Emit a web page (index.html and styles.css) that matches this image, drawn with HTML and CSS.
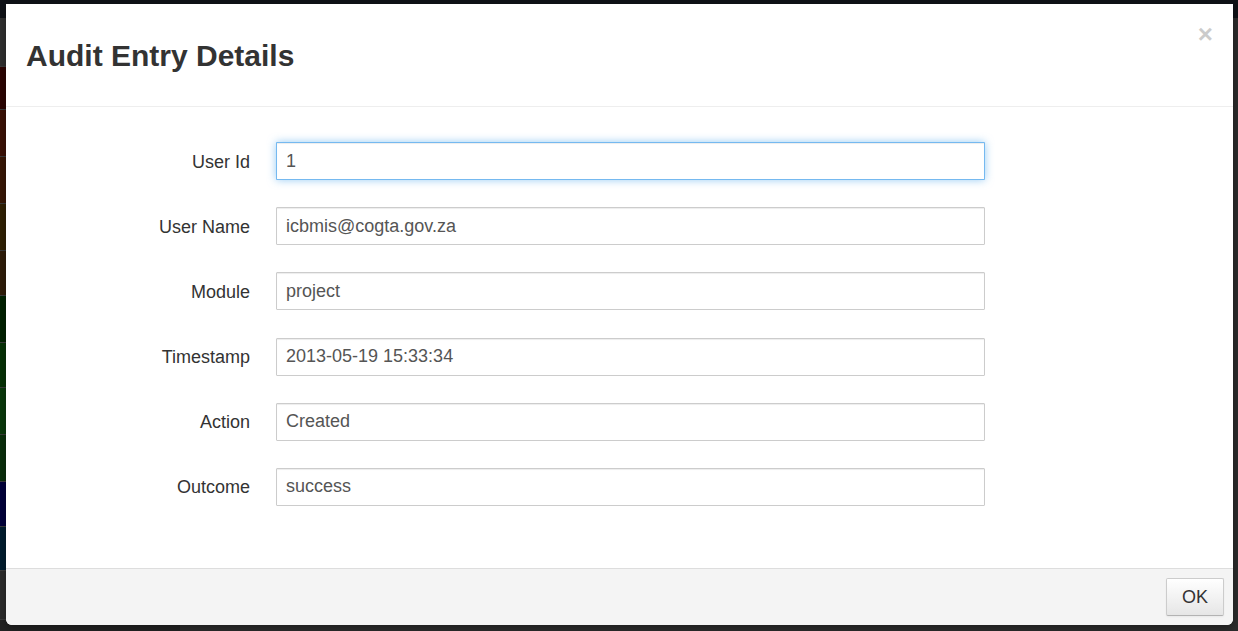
FILE: index.html
```html
<!DOCTYPE html>
<html>
<head>
<meta charset="utf-8">
<title>Audit Entry Details</title>
<link rel="stylesheet" href="styles.css">
</head>
<body>
<div class="page">
  <div class="topbar"></div>
  <div class="main">
    <div class="side">
      <div class="tile t-gray"></div>
      <div class="tile t-red1"></div>
      <div class="tile t-red2"></div>
      <div class="tile t-org1"></div>
      <div class="tile t-org2"></div>
      <div class="tile t-org3"></div>
      <div class="tile t-grn1"></div>
      <div class="tile t-grn2"></div>
      <div class="tile t-grn3"></div>
      <div class="tile t-grn4"></div>
      <div class="tile t-blu1"></div>
      <div class="tile t-blu2"></div>
      <div class="tile t-dark"></div>
    </div>
    <div class="content"></div>
  </div>
</div>

<div class="modal">
  <div class="modal-header">
    <h3 class="modal-title">Audit Entry Details</h3>
    <span class="close">&times;</span>
  </div>
  <div class="modal-body">
    <form class="form">
      <label class="form-label">User Id</label>
      <input class="form-input is-focus" type="text" value="1">
      <label class="form-label">User Name</label>
      <input class="form-input" type="text" value="icbmis@cogta.gov.za">
      <label class="form-label">Module</label>
      <input class="form-input" type="text" value="project">
      <label class="form-label">Timestamp</label>
      <input class="form-input" type="text" value="2013-05-19 15:33:34">
      <label class="form-label">Action</label>
      <input class="form-input" type="text" value="Created">
      <label class="form-label">Outcome</label>
      <input class="form-input" type="text" value="success">
    </form>
  </div>
  <div class="modal-footer">
    <button class="btn" type="button">OK</button>
  </div>
</div>
</body>
</html>
```

FILE: styles.css
```css
html, body {
  margin: 0;
  padding: 0;
  height: 100%;
  overflow: hidden;
}

body {
  background: #222222;
  font-family: "Liberation Sans", Arial, sans-serif;
  color: #333333;
}

.page {
  display: flex;
  flex-direction: column;
  height: 100%;
}

.topbar {
  height: 18px;
  background: #0f1217;
}

.main {
  flex: 1;
  display: flex;
}

.side {
  width: 180px;
  display: flex;
  flex-direction: column;
}

.tile {
  height: 46px;
  border-bottom: 1px solid #3a3a3a;
}

.t-gray { height: 48px; background: #2f2f2f; }
.t-red1 { height: 42px; background: #2b0402; }
.t-red2 { background: #3a1106; }
.t-org1 { background: #371706; }
.t-org2 { background: #302004; }
.t-org3 { height: 44px; background: #2f1c09; }
.t-grn1 { background: #002100; }
.t-grn2 { height: 44px; background: #063106; }
.t-grn3 { background: #0a380b; }
.t-grn4 { background: #0a2e0b; }
.t-blu1 { height: 44px; background: #00003a; }
.t-blu2 { height: 43px; background: #001c2e; }
.t-dark { height: 48px; background: #2a2a2a; }

.content {
  flex: 1;
  background: #2b2b2b;
}

/* Modal */
.modal {
  position: absolute;
  left: 6px;
  top: 4px;
  width: 1227px;
  height: 621px;
  background: #ffffff;
  border-radius: 0 0 6px 6px;
  box-shadow: 0 3px 7px rgba(0, 0, 0, 0.3);
  display: flex;
  flex-direction: column;
  overflow: hidden;
}

.modal-header {
  position: relative;
  padding: 32px 21px 30px 20px;
  border-bottom: 1px solid #eeeeee;
}

.modal-title {
  margin: 0;
  font-size: 30px;
  line-height: 40px;
  font-weight: bold;
  color: #333333;
}

.close {
  position: absolute;
  top: 17px;
  right: 20px;
  font-size: 26px;
  line-height: 26px;
  font-weight: bold;
  color: #000000;
  opacity: 0.2;
}

.modal-body {
  flex: 1;
  padding: 35px 0 0;
}

.form {
  display: grid;
  grid-template-columns: 244px 709px;
  column-gap: 26px;
  row-gap: 27.2px;
  align-items: center;
  margin: 0;
}

.form-label {
  text-align: right;
  font-size: 18px;
  line-height: 24px;
  padding-top: 1px;
  color: #333333;
}

.form-input {
  box-sizing: border-box;
  height: 38px;
  margin: 0;
  padding: 0 9px;
  font-family: "Liberation Sans", Arial, sans-serif;
  font-size: 18px;
  color: #555555;
  background: #ffffff;
  border: 1px solid #cccccc;
  border-radius: 1px;
  box-shadow: inset 0 1px 1px rgba(0, 0, 0, 0.075);
  outline: none;
}

.form-input.is-focus {
  border-color: rgba(82, 168, 236, 0.8);
  box-shadow: inset 0 1px 1px rgba(0, 0, 0, 0.075), 0 0 8px rgba(82, 168, 236, 0.6);
}

.modal-footer {
  display: flex;
  justify-content: flex-end;
  padding: 9px 9px 9px;
  background: #f4f4f4;
  border-top: 1px solid #dddddd;
}

.btn {
  box-sizing: border-box;
  height: 38px;
  padding: 0 15px;
  font-family: "Liberation Sans", Arial, sans-serif;
  font-size: 18px;
  color: #333333;
  background: linear-gradient(to bottom, #ffffff, #e6e6e6);
  border: 1px solid #cccccc;
  border-bottom-color: #b3b3b3;
  border-radius: 2px;
  box-shadow: inset 0 1px 0 rgba(255, 255, 255, 0.2), 0 1px 2px rgba(0, 0, 0, 0.05);
}
```
